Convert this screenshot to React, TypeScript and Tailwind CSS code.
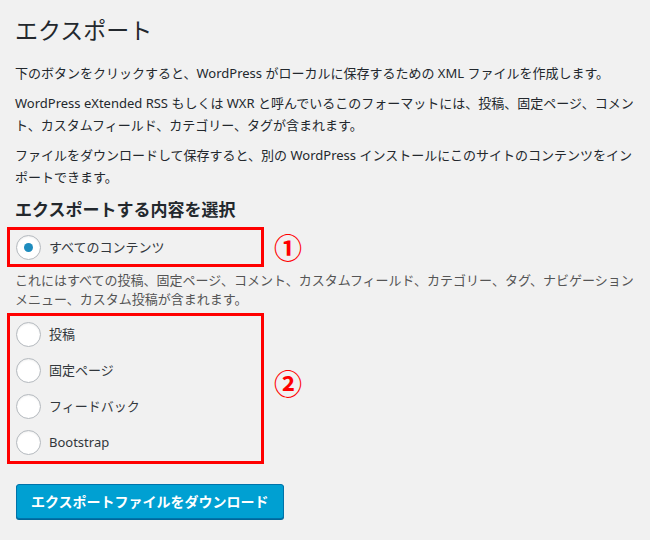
import React, { useState } from "react";

const font = "font-['Noto_Sans','Noto_Sans_CJK_JP',sans-serif]";

type Option = { id: string; label: string };

const postTypes: Option[] = [
  { id: "posts", label: "投稿" },
  { id: "pages", label: "固定ページ" },
  { id: "feedback", label: "フィードバック" },
  { id: "bootstrap", label: "Bootstrap" },
];

function Radio({ checked, label, onSelect }: { checked: boolean; label: string; onSelect: () => void }) {
  return (
    <label className="flex items-center gap-[8px] cursor-pointer" onClick={onSelect}>
      <span className="w-[25px] h-[25px] rounded-full border border-[#b4b9be] bg-white shadow-[inset_0_1px_2px_rgba(0,0,0,0.07)] flex items-center justify-center shrink-0">
        {checked && <span className="w-[9px] h-[9px] rounded-full bg-[#1e8cbe]" />}
      </span>
      <span className="text-[13px] leading-[20px] text-[#32373c]">{label}</span>
    </label>
  );
}

export default function App() {
  const [selected, setSelected] = useState("all");

  return (
    <div className={`${font} bg-[#f1f1f1] min-h-[540px] w-[650px] pl-[15px] pr-[10px] pt-[14px] text-[#23282d]`}>
      <h1 className="text-[23px] leading-[32px] font-normal">エクスポート</h1>

      <p className="mt-[16px] text-[13px] leading-[22px]">
        下のボタンをクリックすると、WordPress がローカルに保存するための XML ファイルを作成します。
      </p>
      <p className="mt-[8px] text-[13px] leading-[22px]">
        WordPress eXtended RSS もしくは WXR と呼んでいるこのフォーマットには、投稿、固定ページ、コメント、カスタムフィールド、カテゴリー、タグが含まれます。
      </p>
      <p className="mt-[8px] text-[13px] leading-[22px]">
        ファイルをダウンロードして保存すると、別の WordPress インストールにこのサイトのコンテンツをインポートできます。
      </p>

      <h2 className="mt-[10px] text-[17px] leading-[24px] font-bold">エクスポートする内容を選択</h2>

      {/* annotated: all content */}
      <div className="mt-[5px] -ml-[8px] flex items-center">
        <div className="w-[257px] h-[40px] border-[3px] border-[#ff0000] flex items-center pl-[6px]">
          <Radio checked={selected === "all"} label="すべてのコンテンツ" onSelect={() => setSelected("all")} />
        </div>
        <span className="ml-[10px] mt-[2px] text-[28px] leading-[28px] font-bold text-[#ff0000]">①</span>
      </div>

      <p className="mt-[4px] text-[13px] leading-[19px] text-[#555]">
        これにはすべての投稿、固定ページ、コメント、カスタムフィールド、カテゴリー、タグ、ナビゲーションメニュー、カスタム投稿が含まれます。
      </p>

      {/* annotated: individual post types */}
      <div className="mt-[4px] -ml-[8px] flex items-center">
        <div className="w-[257px] h-[151px] border-[3px] border-[#ff0000] pl-[6px] pb-[1px]">
          {postTypes.map((t) => (
            <div key={t.id} className="h-[36px] flex items-center">
              <Radio checked={selected === t.id} label={t.label} onSelect={() => setSelected(t.id)} />
            </div>
          ))}
        </div>
        <span className="ml-[10px] -mt-[10px] text-[28px] leading-[28px] font-bold text-[#ff0000]">②</span>
      </div>

      <button className="mt-[20px] ml-[1px] h-[35px] px-[14px] rounded-[3px] bg-[#00a0d2] border border-[#0073aa] shadow-[0_1px_0_#006799] text-white text-[14px] font-bold leading-[33px]">
        エクスポートファイルをダウンロード
      </button>
    </div>
  );
}
